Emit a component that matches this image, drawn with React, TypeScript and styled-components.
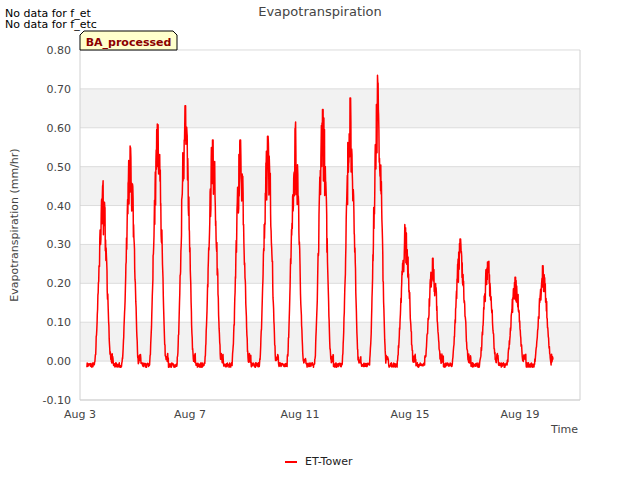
import React from "react";
import styled, { createGlobalStyle } from "styled-components";

const Global = createGlobalStyle`
  html, body { margin: 0; padding: 0; background: #fff; }
  body { font-family: "DejaVu Sans", sans-serif; }
`;

const Page = styled.div`
  position: relative;
  width: 640px;
  height: 480px;
  overflow: hidden;
`;

const Notes = styled.div`
  position: absolute;
  left: 5px;
  top: 8px;
  font-size: 11px;
  line-height: 11px;
  color: #000;
`;

const Chart = styled.svg`
  display: block;
  font-family: "DejaVu Sans", sans-serif;
`;

const L = 80, R = 580, T = 50, B = 400;
const yv = (v: number) => 361.1 - v * 388.9;
const xd = (d: number) => L + d * 27.5;

const peaks = [0.46, 0.56, 0.62, 0.67, 0.58, 0.58, 0.59, 0.61, 0.66, 0.69, 0.73, 0.35, 0.27, 0.32, 0.26, 0.22, 0.25];

function buildPath() {
  let seed = 7;
  const rnd = () => {
    seed = (seed * 16807) % 2147483647;
    return seed / 2147483647;
  };
  const pts: string[] = [];
  for (let d = 0.25; d <= 17.2; d += 0.01) {
    const s0 = d - 0.33;
    const day = Math.floor(s0);
    const f = s0 - day;
    const p = peaks[Math.max(0, Math.min(day, peaks.length - 1))];
    let v = -0.01 + (rnd() - 0.5) * 0.012;
    if (day >= 0 && f > 0.2 && f < 0.8) {
      const s = Math.sin((Math.PI * (f - 0.2)) / 0.6);
      const base = p * Math.pow(s, 1.8);
      v = base * (1 - rnd() * 0.3 * s) + (rnd() - 0.5) * 0.02;
      if (Math.abs(f - 0.5) < 0.015) v = Math.max(v, p * 0.98);
    } else if (f > 0.8 && f < 0.88) {
      v = 0.025 * rnd() - 0.005;
    }
    pts.push(`${xd(d).toFixed(1)},${yv(v).toFixed(1)}`);
  }
  return "M" + pts.join("L");
}

const path = buildPath();
const ticks = [-0.1, 0, 0.1, 0.2, 0.3, 0.4, 0.5, 0.6, 0.7, 0.8];
const xt = [["Aug 3", 0], ["Aug 7", 4], ["Aug 11", 8], ["Aug 15", 12], ["Aug 19", 16]] as const;

export default function App() {
  return (
    <Page>
      <Global />
      <Chart width={640} height={480}>
        <text x={320} y={16} textAnchor="middle" fontSize={13} fill="#444">Evapotranspiration</text>
        {[0, 0.2, 0.4, 0.6].map((v) => (
          <rect key={v} x={L} y={yv(v + 0.1)} width={R - L} height={yv(v) - yv(v + 0.1)} fill="#f2f2f2" />
        ))}
        {ticks.map((v) => (
          <g key={v}>
            <line x1={L} x2={R} y1={yv(v)} y2={yv(v)} stroke="#dcdcdc" strokeWidth={1} />
            <text x={71} y={yv(v) + 4} textAnchor="end" fontSize={11} fill="#444">{v.toFixed(2)}</text>
          </g>
        ))}
        <line x1={L} x2={L} y1={T} y2={B} stroke="#d0d0d0" />
        <line x1={R} x2={R} y1={T} y2={B} stroke="#d0d0d0" />
        <line x1={L} x2={R} y1={B} y2={B} stroke="#d0d0d0" />
        {xt.map(([t, d]) => (
          <text key={t} x={xd(d)} y={418} textAnchor="middle" fontSize={11} fill="#444">{t}</text>
        ))}
        <text x={578} y={433} textAnchor="end" fontSize={11} fill="#444">Time</text>
        <text transform="translate(18,225) rotate(-90)" textAnchor="middle" fontSize={11} fill="#444">Evapotranspiration (mm/hr)</text>
        <path d={path} fill="none" stroke="#ff0000" strokeWidth={1.5} strokeLinejoin="round" />
        <path d="M80,50 L80,35 L84,31 L173,31 L177,35 L177,50 Z" fill="#ffffcc" stroke="#000" strokeWidth={1} />
        <text x={128.5} y={46} textAnchor="middle" fontSize={11} fontWeight="bold" fill="#8b0000">BA_processed</text>
        <line x1={285} x2={297} y1={462} y2={462} stroke="#ff0000" strokeWidth={2} />
        <text x={305} y={465} fontSize={11} fill="#222">ET-Tower</text>
      </Chart>
      <Notes>
        <div>No data for f_et</div>
        <div>No data for f_etc</div>
      </Notes>
    </Page>
  );
}
